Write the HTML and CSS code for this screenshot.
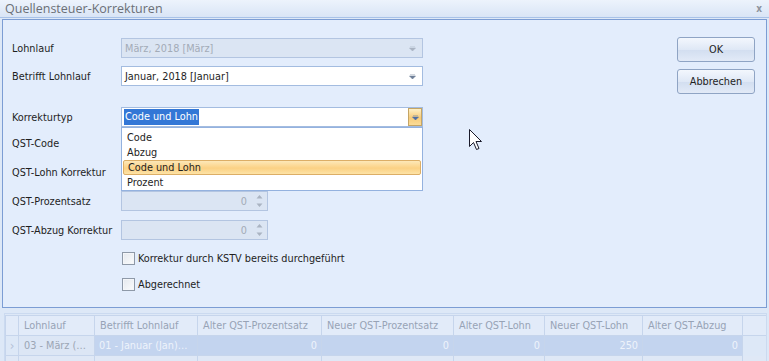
FILE: index.html
```html
<!DOCTYPE html>
<html lang="de">
  <head>
    <meta charset="UTF-8" />
    <title>Quellensteuer-Korrekturen</title>
    <link rel="stylesheet" href="styles.css">
  </head>
  <body>
    <div class="window">
      <div class="titlebar">
        <span class="title">Quellensteuer-Korrekturen</span>
        <span class="close">x</span>
      </div>

      <div class="panel">
        <div class="form">
          <div class="row first">
            <span class="label">Lohnlauf</span>
            <div class="combo disabled">
              <span class="value">März, 2018 [März]</span>
              <svg class="arrow" width="7" height="5" viewBox="0 0 7 5"><path d="M1 0h5M0.5 2h6L3.5 5z" fill="#aab4c2" stroke="#aab4c2" stroke-width="0.6"/></svg>
            </div>
          </div>

          <div class="row gap8">
            <span class="label">Betrifft Lohnlauf</span>
            <div class="combo">
              <span class="value">Januar, 2018 [Januar]</span>
              <svg class="arrow" width="7" height="5" viewBox="0 0 7 5"><path d="M1 0h5M0.5 2h6L3.5 5z" fill="#6e7f99" stroke="#6e7f99" stroke-width="0.6"/></svg>
            </div>
          </div>

          <div class="row gap21">
            <span class="label">Korrekturtyp</span>
            <div class="combo open">
              <span class="value selected">Code und Lohn</span>
              <span class="dropbtn">
                <svg width="7" height="5" viewBox="0 0 7 5"><path d="M1 0h5M0.5 2h6L3.5 5z" fill="#4b6ea8" stroke="#4b6ea8" stroke-width="0.6"/></svg>
              </span>
              <ul class="droplist">
                <li>Code</li>
                <li>Abzug</li>
                <li class="hot">Code und Lohn</li>
                <li>Prozent</li>
              </ul>
            </div>
          </div>

          <div class="row gap6">
            <span class="label">QST-Code</span>
          </div>

          <div class="row gap9">
            <span class="label">QST-Lohn Korrektur</span>
          </div>

          <div class="row gap9">
            <span class="label">QST-Prozentsatz</span>
            <div class="spin disabled">
              <span class="num">0</span>
              <span class="spinbtn">
                <svg width="7" height="14" viewBox="0 0 7 14"><path d="M3.5 1L6.5 4.5h-6zM3.5 13L6.5 9.5h-6z" fill="#aab4c2"/></svg>
              </span>
            </div>
          </div>

          <div class="row gap9">
            <span class="label">QST-Abzug Korrektur</span>
            <div class="spin disabled">
              <span class="num">0</span>
              <span class="spinbtn">
                <svg width="7" height="14" viewBox="0 0 7 14"><path d="M3.5 1L6.5 4.5h-6zM3.5 13L6.5 9.5h-6z" fill="#aab4c2"/></svg>
              </span>
            </div>
          </div>

          <div class="row gap8">
            <span class="label"></span>
            <span class="check"></span>
            <span class="checktext">Korrektur durch KSTV bereits durchgeführt</span>
          </div>

          <div class="row gap6">
            <span class="label"></span>
            <span class="check"></span>
            <span class="checktext">Abgerechnet</span>
          </div>
        </div>

        <div class="buttons">
          <button>OK</button>
          <button>Abbrechen</button>
        </div>

        <svg class="cursor" width="13" height="21" viewBox="0 0 13 21">
          <path d="M0.5 0.5V17.5L4.5 13.5L7.5 20.5L10 19.5L7 12.5H12.5Z" fill="#fff" stroke="#1a1a2a" stroke-width="1"/>
        </svg>
      </div>

      <div class="grid">
        <table>
          <tr class="head">
            <td class="ind"></td>
            <td class="c1">Lohnlauf</td>
            <td class="c2">Betrifft Lohnlauf</td>
            <td class="c3">Alter QST-Prozentsatz</td>
            <td class="c4">Neuer QST-Prozentsatz</td>
            <td class="c5">Alter QST-Lohn</td>
            <td class="c6">Neuer QST-Lohn</td>
            <td class="c7">Alter QST-Abzug</td>
            <td class="fill"></td>
          </tr>
          <tr class="data">
            <td class="ind">›</td>
            <td class="focus">03 - März (…</td>
            <td class="sel">01 - Januar (Jan)…</td>
            <td class="sel r">0</td>
            <td class="sel r">0</td>
            <td class="sel r">0</td>
            <td class="sel r">250</td>
            <td class="sel r">0</td>
            <td class="blank"></td>
          </tr>
          <tr class="empty">
            <td class="ind"></td>
            <td></td>
            <td></td>
            <td></td>
            <td></td>
            <td></td>
            <td></td>
            <td></td>
            <td class="blank"></td>
          </tr>
        </table>
      </div>
    </div>
  </body>
</html>
```

FILE: styles.css
```css
* {
  margin: 0;
  padding: 0;
  box-sizing: border-box;
}

body {
  font-family: "DejaVu Sans Condensed", "DejaVu Sans", sans-serif;
  font-stretch: condensed;
  font-size: 10.8px;
  color: #1e1e1e;
  background-color: #dde8f7;
  width: 769px;
  height: 361px;
  overflow: hidden;
}

.titlebar {
  height: 18px;
  display: flex;
  align-items: center;
  justify-content: space-between;
  padding: 0 5px;
  background: linear-gradient(#edf3fc, #d9e5f6);
  border-bottom: 1px solid #a8c2e8;
}

.title {
  font-family: "Open Sans", sans-serif;
  font-stretch: normal;
  font-size: 12.5px;
  color: #6b6f76;
}

.close {
  font-size: 10px;
  color: #8d949e;
  font-weight: bold;
  margin-right: 2px;
}

.panel {
  position: relative;
  display: flex;
  height: 289px;
  margin: 1px 2px 0 2px;
  border: 1px solid #7c9dd4;
  background-color: #e3edfc;
}

.form {
  padding: 18px 0 0 9px;
  flex: 1;
}

.row {
  display: flex;
  align-items: center;
  height: 20px;
}

.gap6 { margin-top: 6px; }
.gap8 { margin-top: 8px; }
.gap9 { margin-top: 9px; }
.gap21 { margin-top: 21px; }

.label {
  width: 109px;
  flex-shrink: 0;
}

.combo {
  position: relative;
  width: 302px;
  height: 20px;
  display: flex;
  align-items: center;
  border: 1px solid #a3bce0;
  background-color: #fff;
  padding-left: 3px;
}

.combo.disabled,
.spin.disabled {
  background-color: #dbe5f3;
  border-color: #b3c5e1;
  color: #a3abb7;
}

.combo .arrow {
  position: absolute;
  right: 6px;
  top: 7px;
}

.combo .value.selected {
  background-color: #3377d6;
  color: #fff;
  padding: 1px 1px 2px 1px;
  margin-left: -1px;
}

.dropbtn {
  position: absolute;
  right: 0;
  top: 0;
  width: 14px;
  height: 18px;
  display: flex;
  align-items: center;
  justify-content: center;
  border: 1px solid #c5a565;
  background: linear-gradient(#fdf0c6, #f7cc7a 55%, #fbdc98);
}

.droplist {
  position: absolute;
  left: -1px;
  top: 19px;
  width: 302px;
  height: 64px;
  list-style: none;
  background-color: #fff;
  border: 1px solid #94b2df;
  padding: 2px 1px 0 1px;
  z-index: 2;
}

.droplist li {
  height: 15px;
  line-height: 15px;
  padding-left: 4px;
}

.droplist li.hot {
  border: 1px solid #dcae66;
  border-radius: 2px;
  line-height: 13px;
  background: linear-gradient(#fde8b8, #fbd184 55%, #fde3a6);
}

.spin {
  width: 147px;
  height: 20px;
  display: flex;
  align-items: center;
  justify-content: flex-end;
  border: 1px solid #b3c5e1;
}

.spin .num {
  margin-right: 6px;
}

.spinbtn {
  width: 12px;
  display: flex;
  align-items: center;
  justify-content: center;
  margin-right: 2px;
}

.check {
  width: 13px;
  height: 13px;
  margin-left: 1px;
  border: 1px solid #8e99a8;
  background: linear-gradient(135deg, #e4e8ee, #fbfcfd);
  box-shadow: inset 0 0 0 1px #f4f6f9;
}

.checktext {
  margin-left: 3px;
}

.buttons {
  display: flex;
  flex-direction: column;
  gap: 7px;
  padding: 17px 11px 0 0;
}

button {
  width: 78px;
  height: 25px;
  font: inherit;
  color: #1e1e1e;
  border: 1px solid #8fa4c4;
  border-radius: 3px;
  background: linear-gradient(#f3f7fd, #dfe8f6 50%, #d2def0 51%, #e2eaf7);
}

.cursor {
  position: absolute;
  left: 466px;
  top: 109px;
}

.grid {
  margin: 5px 2px 0 4px;
  border: 1px solid #cbdaf0;
  border-bottom: none;
  padding: 1px 0 0 0;
  height: 60px;
  overflow: hidden;
}

table {
  border-collapse: collapse;
  table-layout: fixed;
  width: 762px;
  color: #97a3b6;
}

td {
  height: 20px;
  padding: 0 4px;
  border: 1px solid #c6d5ec;
  white-space: nowrap;
  overflow: hidden;
}

.head td {
  background-color: #e2ebf9;
  padding-left: 5px;
}

.ind { width: 13px; padding: 0; text-align: center; color: #b4c2d8; font-size: 13px; }
.c1 { width: 76px; }
.c2 { width: 103px; }
.c3 { width: 124px; }
.c4 { width: 132px; }
.c5 { width: 91px; }
.c6 { width: 98px; }
.c7 { width: 100px; }

.data td.focus {
  background-color: #dce6f5;
  color: #9ba5b4;
  padding-left: 5px;
}

.data td.sel {
  background-color: #c3d4ef;
  color: #eef3fb;
}

.data td.r {
  text-align: right;
}

td.blank {
  border: none;
  background-color: #dde8f7;
}

.empty td {
  background-color: #dfe8f6;
}
```
